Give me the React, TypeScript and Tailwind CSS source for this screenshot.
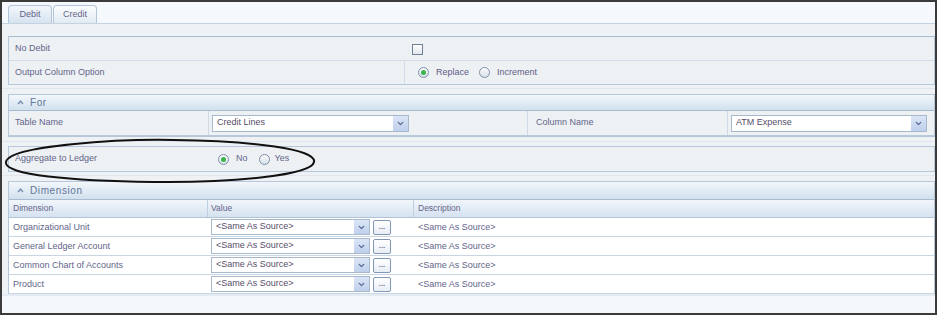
import { ChevronDown } from 'lucide-react';

// Debit/Credit mapping form — legacy "Oracle-ish" admin screen with a hand-drawn annotation.

function Radio({ checked }: { checked?: boolean }) {
  return (
    <span className="flex h-[11px] w-[11px] shrink-0 items-center justify-center rounded-full border border-[#7d91aa] bg-gradient-to-b from-[#fbfcfd] to-[#d8e0e8]">
      {checked ? <span className="h-[5px] w-[5px] rounded-full bg-[#3cb44b]" /> : null}
    </span>
  );
}

function Select({ value, className }: { value: string; className: string }) {
  return (
    <div className={`flex items-stretch border border-[#a9b9cc] bg-white ${className}`}>
      <span className="flex flex-1 items-center truncate pl-[4px] text-[#564e68]">{value}</span>
      <span className="flex w-[15px] items-center justify-center bg-gradient-to-b from-[#dbe5f6] to-[#bfd0ec]">
        <ChevronDown size={9} strokeWidth={3.5} color="#55688f" />
      </span>
    </div>
  );
}

function SectionHeader({ title, className }: { title: string; className: string }) {
  return (
    <div
      className={`flex items-center gap-[6px] border-b border-[#a8bbd0] bg-gradient-to-b from-[#f2f7fb] to-[#d2e1ee] pl-[8px] text-[10px] tracking-[0.6px] text-[#62749a] ${className}`}
    >
      <svg width="7" height="7" viewBox="0 0 7 7">
        <path d="M1 5 L3.5 2 L6 5" fill="none" stroke="#7a8eac" strokeWidth="1.4" />
        <circle cx="3.5" cy="3.6" r="0.8" fill="#9fb1c8" />
      </svg>
      <span>{title}</span>
    </div>
  );
}

const dimensions = [
  'Organizational Unit',
  'General Ledger Account',
  'Common Chart of Accounts',
  'Product',
];

export default function App() {
  return (
    <div className="relative h-[315px] w-[937px] overflow-hidden border-2 border-[#3b3b3b] bg-[#f4f8fc] font-['Liberation_Sans',Arial,sans-serif] text-[9px] text-[#63658a]">
      {/* tabs */}
      <div className="flex h-[22px] items-end gap-[1px] border-b border-[#c5d3e1] bg-[#f5f9fd] pl-[6px]">
        <div className="flex h-[18px] w-[44px] items-center justify-center rounded-t-[4px] border border-b-0 border-[#b2c5da] bg-gradient-to-b from-[#f3f7fb] to-[#d6e3f0]">
          Debit
        </div>
        <div className="flex h-[18px] w-[44px] items-center justify-center rounded-t-[4px] border border-b-0 border-[#b2c5da] bg-gradient-to-b from-[#fbfdfe] to-[#e2ebf4]">
          Credit
        </div>
      </div>

      <div className="bg-[#eff2f5]">
        <div className="h-[12px]" />

        {/* debit options */}
        <div className="ml-[6px] border border-[#b6c7d9] border-t-[#a9bdd2] bg-[#eef1f4]">
          <div className="grid h-[24px] grid-cols-[395px_1fr] items-center border-b border-[#d2dde7]">
            <span className="pl-[6px]">No Debit</span>
            <span className="pl-[8px] pt-[1px]">
              <span className="block h-[11px] w-[11px] border border-[#6f8096] bg-gradient-to-b from-[#fdfdfd] to-[#e3e7ec]" />
            </span>
          </div>
          <div className="grid h-[23px] grid-cols-[395px_1fr] items-stretch">
            <span className="flex items-center pl-[6px]">Output Column Option</span>
            <span className="flex items-center border-l border-[#d2dde7] pl-[13px]">
              <Radio checked />
              <span className="ml-[7px] text-[#5d5b86]">Replace</span>
              <span className="ml-[10px]">
                <Radio />
              </span>
              <span className="ml-[7px] text-[#5d5b86]">Increment</span>
            </span>
          </div>
        </div>

        <div className="mt-[3px] h-[1px] bg-[#dfe6ee]" />
        <div className="h-[5px]" />

        {/* for */}
        <div className="ml-[6px] border border-[#b6c7d9] bg-[#eef1f4]">
          <SectionHeader title="For" className="h-[16px]" />
          <div className="grid h-[25px] grid-cols-[199px_319px_200px_1fr] border-b border-[#b9c9da]">
            <span className="flex items-center pl-[6px]">Table Name</span>
            <span className="flex items-center border-l border-[#cfdae5] pl-[3px]">
              <Select value="Credit Lines" className="h-[17px] w-[197px]" />
            </span>
            <span className="flex items-center border-l border-[#cfdae5] pl-[8px]">Column Name</span>
            <span className="flex items-center border-l border-[#cfdae5] pl-[3px]">
              <Select value="ATM Expense" className="h-[17px] w-[196px]" />
            </span>
          </div>
        </div>

        <div className="mt-[4px] h-[1px] bg-[#dfe6ee]" />
        <div className="h-[4px]" />

        {/* aggregate */}
        <div className="ml-[6px] flex h-[26px] items-center border border-[#b6c7d9] bg-[#eef1f4]">
          <span className="w-[209px] pl-[6px]">Aggregate to Ledger</span>
          <Radio checked />
          <span className="ml-[7px]">No</span>
          <span className="ml-[11px]">
            <Radio />
          </span>
          <span className="ml-[5px]">Yes</span>
        </div>

        <div className="mt-[3px] h-[1px] bg-[#dfe6ee]" />
        <div className="h-[5px]" />

        {/* dimension */}
        <div className="ml-[6px] border border-b-0 border-[#b6c7d9] bg-white">
          <SectionHeader title="Dimension" className="h-[18px]" />
          <div className="grid h-[18px] grid-cols-[198px_206px_1fr] border-b border-[#b3c4d7] bg-gradient-to-b from-[#f2f6fb] to-[#d5e2f0] text-[8.5px]">
            <span className="flex items-center pl-[4px]">Dimension</span>
            <span className="flex items-center border-l border-[#c0cfdf] pl-[3px]">Value</span>
            <span className="flex items-center border-l border-[#c0cfdf] pl-[4px]">Description</span>
          </div>
          {dimensions.map((d) => (
            <div
              key={d}
              className="grid h-[19px] grid-cols-[198px_206px_1fr] border-b border-[#c9d5e3] bg-white"
            >
              <span className="flex items-center pl-[4px] pt-[1px]">{d}</span>
              <span className="flex items-center pl-[4px]">
                <Select value="<Same As Source>" className="h-[16px] w-[159px]" />
                <span className="ml-[3px] flex h-[15px] w-[18px] items-center justify-center rounded-[2px] border border-[#8197b5] bg-gradient-to-b from-white to-[#e8eef5] text-[8px] font-bold leading-none text-[#6a7ea2]">
                  ...
                </span>
              </span>
              <span className="flex items-center pl-[5px] pt-[1px]">&lt;Same As Source&gt;</span>
            </div>
          ))}
        </div>
      </div>

      <div className="h-[2px] bg-[#e4ebf2]" />

      {/* hand-drawn annotation around "Aggregate to Ledger" */}
      <svg
        className="absolute left-[1px] top-[135px]"
        width="316"
        height="48"
        viewBox="0 0 316 48"
      >
        <path
          d="M3 25 C 6 8, 120 2, 170 3 C 250 4, 314 12, 311 25 C 309 38, 230 46, 150 45 C 70 44, 0 38, 3 25 Z"
          fill="none"
          stroke="#111"
          strokeWidth="2"
        />
      </svg>
    </div>
  );
}
